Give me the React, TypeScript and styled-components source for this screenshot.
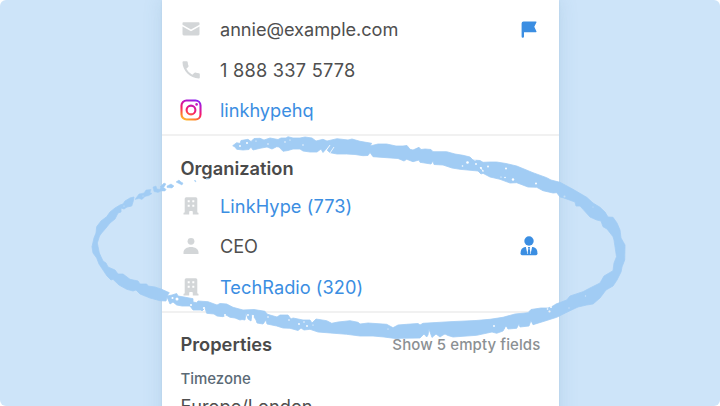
import React from 'react';
import styled, { createGlobalStyle } from 'styled-components';

const Global = createGlobalStyle`
  * { box-sizing: border-box; }
  body { margin: 0; overflow: hidden; background: #fff; font-family: Inter, "Liberation Sans", sans-serif; }
`;

const Stage = styled.main`
  position: relative;
  width: 720px;
  height: 406px;
  overflow: hidden;
  border-radius: 6px;
  background: #cde4f9;
  display: flex;
  justify-content: center;
`;

const Card = styled.div`
  width: 396.6px;
  margin-left: 1.4px;
  height: 440px;
  background: #fff;
  box-shadow: 0 0 18px rgba(80, 130, 165, 0.17), 0 0 2px rgba(80, 120, 160, 0.12);
`;

const Section = styled.section<{ $h: number; $top: number }>`
  height: ${p => p.$h}px;
  padding: ${p => p.$top}px 18px 0;
  border-bottom: 2px solid #f1f1f1;
`;

const Rows = styled.div<{ $gap?: number }>`
  padding-top: ${p => p.$gap ?? 0}px;
  margin: 0 1.4px 0 -0.4px;
`;

const Row = styled.div`
  height: 40.6px;
  display: grid;
  grid-template-columns: 22px 1fr 22px;
  column-gap: 18px;
  align-items: center;
  justify-items: center;
`;

const Value = styled.span<{ $link?: boolean; $ls?: number }>`
  justify-self: start;
  font-size: 18.2px;
  line-height: 24px;
  letter-spacing: ${p => p.$ls ?? 0}px;
  white-space: nowrap;
  color: ${p => (p.$link ? '#3b8ee2' : '#4f4f4f')};
`;

const Heading = styled.h2`
  margin: 0;
  font-size: 18.3px;
  line-height: 24px;
  font-weight: 600;
  color: #4a4a4a;
`;

const HeadingBar = styled.header`
  display: flex;
  justify-content: space-between;
  align-items: center;
`;

const Toggle = styled.span`
  margin-right: 0.6px;
  font-size: 15px;
  font-weight: 500;
  letter-spacing: 0.1px;
  color: #8b9093;
`;

const Label = styled.div`
  margin-top: 14px;
  font-size: 15px;
  line-height: 18px;
  font-weight: 500;
  color: #5b6a76;
`;

const Field = styled.div`
  margin-top: 6px;
  font-size: 18.2px;
  line-height: 24px;
  color: #4f4f4f;
`;

const Icon = styled.svg`
  display: block;
  overflow: visible;
`;

const Scribble = styled.svg`
  position: absolute;
  inset: 0;
  pointer-events: none;
`;

const GREY = '#d3d6d8';
const BLUE = '#3b8ee2';

const Mail = () => (
  <Icon width="18" height="14" viewBox="0 0 18 14" fill={GREY}>
    <path d="M1.4 0.2h15.2q.9 0 .9.9v1.7L9 7.5.5 2.8V1.100q0-.9.9-.9z" />
    <path d="M.5 4.500 9 9.200l8.500-4.700v7.600q0 1.300-1.300 1.300H1.800Q.5 13.400.5 12.100z" />
  </Icon>
);

const Phone = () => (
  <Icon width="18" height="18" viewBox="0 0 18 18" fill={GREY}>
    <path d="M1.500.3h3.200q.9 0 1 .9.2 2 .8 3.500.2.700-.300 1.200L4.300 7.800q2.100 4 6 6l1.900-1.900q.500-.500 1.200-.300 1.600.500 3.500.700.900.1.900 1v3.200q0 1-1 1C8.200 17.500.5 9.800.5 1.300q0-1 1-1z" />
  </Icon>
);

const Instagram = () => (
  <Icon width="22" height="22" viewBox="0 0 22 22" fill="none">
    <defs>
      <linearGradient id="ig" x1="5" y1="22" x2="14" y2="0" gradientUnits="userSpaceOnUse">
        <stop offset="0" stopColor="#ffc82e" />
        <stop offset=".22" stopColor="#ff7a2b" />
        <stop offset=".48" stopColor="#f81b68" />
        <stop offset=".75" stopColor="#c517b8" />
        <stop offset="1" stopColor="#8b22f2" />
      </linearGradient>
    </defs>
    <rect x="1.500" y="1.500" width="19" height="19" rx="5" stroke="url(#ig)" strokeWidth="2.100" />
    <circle cx="11" cy="11" r="4.400" stroke="url(#ig)" strokeWidth="2.100" />
    <circle cx="16.600" cy="5.400" r="1.300" fill="#c81bc0" />
  </Icon>
);

const Building = () => (
  <Icon width="16" height="18" viewBox="0 0 16 18" fill={GREY} fillRule="evenodd">
    <path d="M3.200.3h9.600q1.500 0 1.500 1.500v13.700h.4q.8 0 .8.800v1.200H9.800v-2.700q0-.9-.9-.9H7.100q-.9 0-.9.900v2.700H.5v-1.200q0-.8.800-.800h.4V1.800Q1.700.3 3.200.3zM4.700 3.300v2h2v-2zm4.600 0v2h2v-2zM4.700 7.800v2h2v-2zm4.600 0v2h2v-2z" />
  </Icon>
);

const Person = () => (
  <Icon width="16" height="18" viewBox="0 0 16 18" fill={GREY}>
    <circle cx="8" cy="4.300" r="3.400" />
    <path d="M.5 17v-1.500C.5 12 3.800 9.900 8 9.900s7.500 2.100 7.500 5.600V17z" />
  </Icon>
);

const Flag = () => (
  <Icon width="16" height="17" viewBox="0 0 16 17" fill={BLUE}>
    <path d="M2.500.5h12.300q1.100 0 .6 1L13.300 5.700l2.100 4.500q.5 1-.6 1H3v4.300q0 1.200-1.200 1.200Q.6 16.700.6 15.500V2.400Q.6.5 2.500.5z" />
  </Icon>
);

const Manager = () => (
  <Icon width="18" height="20" viewBox="0 0 18 20">
    <circle cx="9" cy="5" r="4.700" fill={BLUE} />
    <path d="M5 11h8q4.500.8 4.500 6.500 0 1.800-1.800 1.800H2.300q-1.800 0-1.800-1.800Q.5 11.800 5 11z" fill={BLUE} />
    <path d="M5.800 10.800 7.500 18.300 9 16l1.500 2.300 1.700-7.500z" fill="#fff" />
    <path d="M7.900 11h2.200l-.5 1.600.8 3.800L9 18.200l-1.400-1.800.8-3.800z" fill={BLUE} />
  </Icon>
);

const brush = `M232.700 145.700 L236.700 142.700 240 143.500 241 140.500 248 139.300 251 141.500 254 138.500 260 138.300 264 140 270 138 278 139.500
 281 138 286 138 288 136.700 293 138 300 138 305 137 312 138 316 141 323 139.300 327 141 337 138.700 348 140 352 139 360 141.300
 371.700 143.300 370 146 378 144 386.700 144 396 146 403 146 407 145.500 410 149.300 413 150 419 147.300 421 149.500 425 149 431 149.500 433 151.700 440 151.700 446.700 151.700
 455 154 463 155.300 470 157 473 160 480 160.500 483 162.300 490 162 496.700 162 506 163.500 516.700 166 533 172.700 546.700 177.700
 551 180 560 182.300 573 189.300 586.700 197.300 593 203 600 207.300 605 212 608 217 613 217.300 617 223 620 230 621 238 625 245
 624.700 260 622 267 621 272 617 280 613 286 606 290 600 298 593 304 586.700 305 578 307 570 310.700 556.700 317.300 545 321
 533 324.700 531 320.500 529 326 520 327 519 324 516.700 328.300 508 329 506 326 503 331 496.700 333.300 492 332 476.700 335.300 453 337
 448 335.500 445 334 443 335 440 337 436 334 432 337.500 430 332 429 329 428 335 426.700 337 424 334 420 338 400 338.300 396.700 338.700
 384 337 373 336 360 336 346.700 334.300 326.700 332.700 318 332 310 329.300 304 330 301 328 298 330.500 290 328.300 283 328 276.700 326
 267 324 266 320 263 324 257 323 256 320 252 314 251 321 248 319 246 313 245 320 242 319.500 240 320 235 318 230 317.300
 226 315 223 316.700 217 316 214 314 206.700 313.300 205 308 202 311 201 310 193 310 190 306 182 306 176.700 305 173 302 170 304 167 297 166 301 160 300.700
 150 298 140 294 136 290 133 291 126.700 289.300 119 285 113 279.300 111 280 107 276 103 270 99 264 96.700 258 93 253 92 246.700
 94 238 96 233 96.700 226.700 101 221 106.700 216.700 110 212 115 208 120 205 123 204 125 201 130 198 134 197 133 202 131.700 206
 127 207 124 209 121 208 121 212 118 213 115 219 110 223 106 228 101.700 233 99.500 236 97.300 243 99.300 253 103 261 106 263 108 267
 115 270 118 274 123 274 130 279.300 138 281 140 284 146.700 284 148 286 155 287 161.700 289.300 169.300 292.700 167 296 172 295 176.700 293.500 178 296 184 297
 193 298.700 193 302 196.700 302.700 198 301 208 301.700 217 305 220 303.500 226.700 304 233 307.300 243 310 254 309.500 265 311.300 267 314
 270 315 277 317 280 315 288 315 291 319 293 318 303 320 310 320 312 323 316 319 326.700 320.700 331.700 323.300 338 322 350 320.700
 358 322.300 360 324 368 323 386.700 324.300 393 327.700 398 325 406.700 324.300 418 323.500 420 325 423 323.300 450 321.700 476 320.500 490 319.300
 503 317.300 515 314 528 312.700 531 309.500 541 308 548 308 553 306 556 304 566.700 300 570 296 583 291.700 590 288 600 283
 604 276 613 270.700 614 263 616.500 256.700 614 240 613 236.700 607 229 603 226.700 601 221 596.700 220 590 217 583 209.300 580 206
 576 206 575 202 563 197.700 560 197 556.700 192.700 553 193 543 190.700 536.700 187.300 528 187 516.700 182.700 510 183 500 179.300
 490 177 483 173.300 481 174 478 171 460 169.300 452 168 443 165 434 164.500 433 161 431 164 420 162.300 419 160 413 161.700
 406.700 159.300 404 161 398 158.500 386.700 157.700 373 156.700 370 152.500 368 155.500 363 155.700 355 154.500 346.700 154 337 154 330 152.700 327 150
 331 144 323 152.500 321 149 317 152 310 152 303 151 300 149 293 149 288 150.500 283 151.300 279 147 276.700 146.700 272 149
 267 147 260 148.300 253 150 251 147 249 149.500 243 150 236.700 149.300 235 147z`;

const flecks = `M136 198l3-4 5-1 2-3 5-.5-1 3 2 1-3 2-4 1-3 3-3-1-4 1zM153 187l3-1 1 3 3 .5 1-3 3 1 2 2-1 1.500-4 0-3 1.500-4-1zM160 187l4-4 2 1-2 3zM167 186l4-2 3 2-2 2-5-.5zM176 182l3-2 2 2 2 1-1 2zM195 180l1 2-1.500-1zM206 178.500l2-.3 1 .8-3 .2z`;

const gaps: [number, number, number][] = [
  [240, 146, 0.9], [247, 143, 1], [256, 141, 0.6], [268, 144, 0.7], [285, 142, 0.7], [290, 140, 0.6], [303, 145, 0.7],
  [467.500, 162.500, 1.300], [462.500, 166, 0.8], [476, 164, 0.9], [475, 160, 0.7], [481, 168, 1], [483, 171, 0.8], [488, 166.500, 0.9],
  [506, 168.500, 1], [505, 177.500, 0.8], [513, 179.500, 1.200], [501, 177, 0.6], [536, 183.500, 1], [564.500, 196.500, 1], [593, 207, 0.5],
  [494, 326, 0.9], [506, 328, 0.8], [551, 307, 1], [549.500, 311.500, 1.100], [547.500, 309, 0.8], [585.500, 296, 0.7], [569, 308, 0.7],
  [177, 299, 1.500], [172.500, 298, 1], [191, 305, 1], [204, 308, 1.100], [225, 315, 1], [253, 316, 1.100], [248, 315, 0.9],
  [268, 317, 0.8], [289, 320, 0.8], [299, 324, 0.9], [307, 326, 0.9], [304, 322, 0.7], [313, 325, 0.6], [388, 329, 0.5],
  [143, 196, 0.5], [124, 206, 0.6],
];

const BrushEllipse = () => (
  <Scribble width="720" height="406" viewBox="0 0 720 406">
    <defs>
      <mask id="grain" maskUnits="userSpaceOnUse" x="0" y="0" width="720" height="406">
        <rect width="720" height="406" fill="#fff" />
        {gaps.map(([x, y, r]) => (
          <circle key={`${x}-${y}`} cx={x} cy={y} r={r} fill="#000" />
        ))}
        <path d="M325 152l5-7M330 153l4-6M480 167l3 4" stroke="#000" strokeWidth=".8" />
      </mask>
    </defs>
    <g fill="#a1ccf4" mask="url(#grain)" strokeLinejoin="round">
      <path d={brush} stroke="#a1ccf4" strokeWidth=".8" />
      <path d={flecks} stroke="#a1ccf4" strokeWidth=".5" />
    </g>
  </Scribble>
);

export default function App() {
  return (
    <>
      <Global />
      <Stage>
        <Card>
          <Section $h={136} $top={9}>
            <Rows>
              <Row><Mail /><Value $ls={-0.05}>annie@example.com</Value><Flag /></Row>
              <Row><Phone /><Value $ls={0.24}>1 888 337 5778</Value></Row>
              <Row><Instagram /><Value $link $ls={-0.03}>linkhypehq</Value></Row>
            </Rows>
          </Section>
          <Section $h={177} $top={20}>
            <Heading>Organization</Heading>
            <Rows $gap={5.5}>
              <Row><Building /><Value $link $ls={0.07}>LinkHype (773)</Value></Row>
              <Row><Person /><Value $ls={-0.1}>CEO</Value><Manager /></Row>
              <Row><Building /><Value $link $ls={0.04}>TechRadio (320)</Value></Row>
            </Rows>
          </Section>
          <Section $h={140} $top={19}>
            <HeadingBar><Heading>Properties</Heading><Toggle>Show 5 empty fields</Toggle></HeadingBar>
            <Label>Timezone</Label>
            <Field>Europe/London</Field>
          </Section>
        </Card>
        <BrushEllipse />
      </Stage>
    </>
  );
}
